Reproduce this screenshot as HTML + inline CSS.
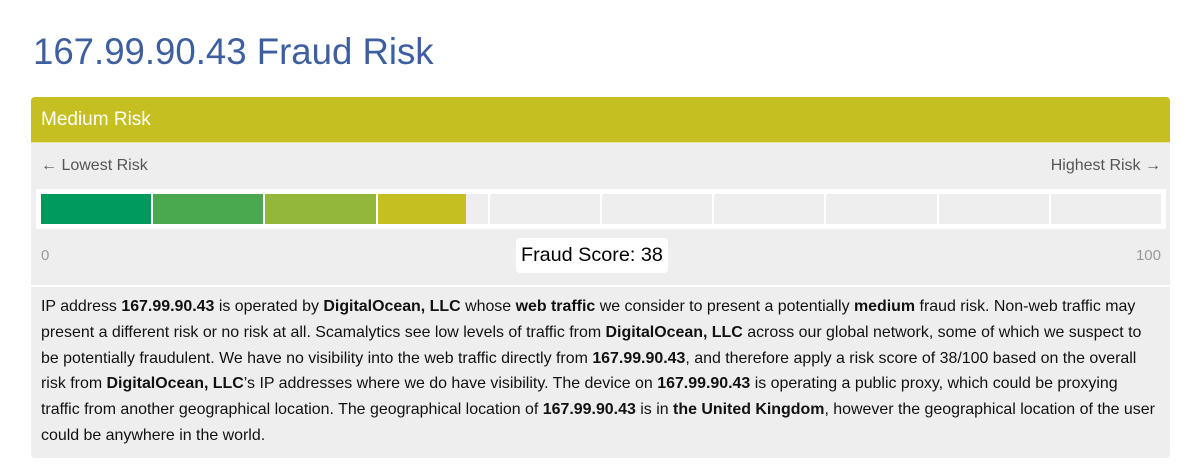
<!DOCTYPE html>
<html><head><style>
body{margin:0;background:#fff;font-family:"Liberation Sans",Arial,sans-serif;width:1199px;height:474px;overflow:hidden;position:relative}
h1{position:absolute;left:33px;top:31px;margin:0;font-size:36.6px;font-weight:normal;color:#3d5f9f;line-height:42px}
.panel{position:absolute;left:31px;top:97px;width:1139px;height:361px;background:#eee;border-radius:4px;overflow:hidden}
.hd{height:45px;background:#c5bf22;color:#fff;font-size:19px;line-height:45px;padding-left:10px;border-bottom:1px solid #e6e6a0}
.lbl{position:absolute;top:60px;font-size:16px;color:#555}
.bar{position:absolute;left:5px;top:92px;width:1120px;height:30px;background:#fff;padding:5px;display:flex;gap:2px}
.c{flex:1;background:#eee;position:relative}
.n{position:absolute;top:150px;font-size:15px;color:#999}
.fs{position:absolute;left:485px;top:141px;background:#fff;border-radius:4px;padding:0 5px;height:35px;line-height:35px;font-size:19.8px;color:#000}
.txt{position:absolute;left:0;top:188px;width:1139px;border-top:2px solid #fff;padding:7px 8px 7px 10px;box-sizing:border-box;font-size:15.95px;line-height:25.8px;color:#111;white-space:nowrap}
</style></head><body>
<h1>167.99.90.43 Fraud Risk</h1>
<div class="panel">
<div class="hd">Medium Risk</div>
<div class="lbl" style="left:10px">← Lowest Risk</div>
<div class="lbl" style="right:9px">Highest Risk →</div>
<div class="bar">
<div class="c" style="background:#009a5e"></div>
<div class="c" style="background:#4aa94e"></div>
<div class="c" style="background:#93b73b"></div>
<div class="c"><div style="position:absolute;left:0;top:0;bottom:0;width:80%;background:#c5bf22"></div></div>
<div class="c"></div><div class="c"></div><div class="c"></div><div class="c"></div><div class="c"></div><div class="c"></div>
</div>
<div class="n" style="left:10px">0</div>
<div class="n" style="right:9px">100</div>
<div class="fs">Fraud Score: 38</div>
<div class="txt">IP address <b>167.99.90.43</b> is operated by <b>DigitalOcean, LLC</b> whose <b>web traffic</b> we consider to present a potentially <b>medium</b> fraud risk. Non-web traffic may<br>present a different risk or no risk at all. Scamalytics see low levels of traffic from <b>DigitalOcean, LLC</b> across our global network, some of which we suspect to<br>be potentially fraudulent. We have no visibility into the web traffic directly from <b>167.99.90.43</b>, and therefore apply a risk score of 38/100 based on the overall<br>risk from <b>DigitalOcean, LLC</b>’s IP addresses where we do have visibility. The device on <b>167.99.90.43</b> is operating a public proxy, which could be proxying<br>traffic from another geographical location. The geographical location of <b>167.99.90.43</b> is in <b>the United Kingdom</b>, however the geographical location of the user<br>could be anywhere in the world.</div>
</div>
</body></html>
